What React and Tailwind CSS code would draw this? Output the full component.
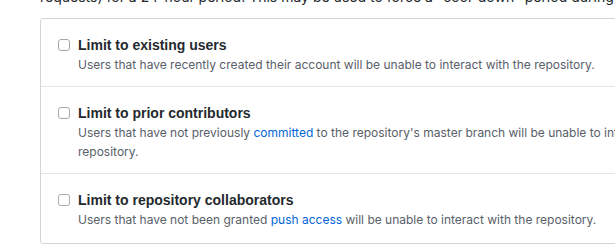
import React from 'react';

const options = [
  {
    id: 'existing',
    title: 'Limit to existing users',
    before: 'Users that have recently created their account will be unable to interact with the repository.',
  },
  {
    id: 'prior',
    title: 'Limit to prior contributors',
    before: 'Users that have not previously ',
    link: 'committed',
    after: " to the repository's master branch will be unable to interact with the repository.",
  },
  {
    id: 'collaborators',
    title: 'Limit to repository collaborators',
    before: 'Users that have not been granted ',
    link: 'push access',
    after: ' will be unable to interact with the repository.',
  },
];

const App = () => {
  return (
    <div
      className="w-[615px] h-[246px] overflow-hidden bg-white text-[#24292e]"
      style={{ fontFamily: '"Liberation Sans", Arial, sans-serif' }}
    >
      <div className="w-[760px] pl-[40px]">
        <p className="text-[14px] leading-[21px] -mt-[14px] whitespace-nowrap" style={{ fontFamily: 'Inter, sans-serif' }}>
          requests) for a 24-hour period. This may be used to force a "cool-down" period during heated discussions.
        </p>
        <div className="mt-[11px] w-[706px] border border-[#d1d5da] rounded-[3px]">
          {options.map((opt, i) => (
            <div
              key={opt.id}
              className={
                i === 0
                  ? 'flex pl-[17px] pr-[16px] pt-[17px] pb-[12px]'
                  : i === 1
                  ? 'flex pl-[17px] pr-[16px] pt-[17px] pb-[12px] border-t border-[#e1e4e8]'
                  : 'flex pl-[17px] pr-[16px] pt-[17px] pb-[14px] border-t border-[#e1e4e8]'
              }
            >
              <span className="mt-[3px] w-[12px] h-[12px] shrink-0 rounded-[3px] border border-[#a8a8a8] bg-white" />
              <div className="ml-[8px] flex-1">
                <div className="text-[14px] leading-[18px] font-bold">{opt.title}</div>
                <p
                  className="text-[12px] leading-[19px] text-[#586069] mt-[1px]"
                  style={{ fontFamily: 'Inter, "Liberation Sans", sans-serif' }}
                >
                  {opt.before}
                  {opt.link && <a className="text-[#0366d6]">{opt.link}</a>}
                  {opt.after}
                </p>
              </div>
            </div>
          ))}
        </div>
      </div>
    </div>
  );
};

export default App;
